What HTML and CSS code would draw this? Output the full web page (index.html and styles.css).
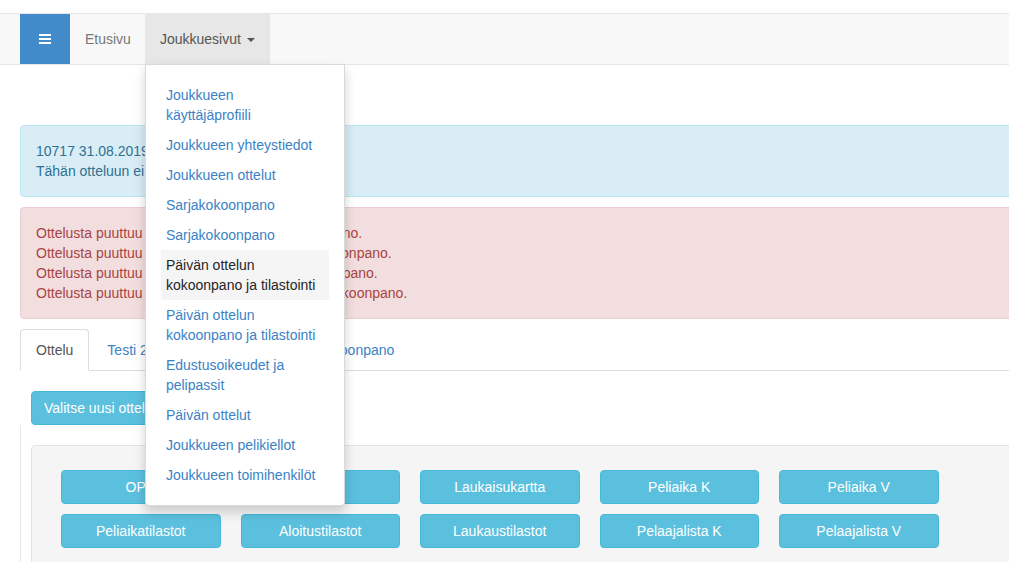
FILE: index.html
```html
<!DOCTYPE html>
<html lang="fi">
<head>
<meta charset="utf-8">
<title>Joukkuesivut</title>
<link rel="stylesheet" href="styles.css">
</head>
<body>
<header class="navbar">
  <div class="nav-inner">
    <button class="menu-btn" type="button" aria-label="Valikko">
      <svg width="12" height="10" viewBox="0 0 12 10"><rect x="0" y="0" width="12" height="2" fill="#fff"/><rect x="0" y="4" width="12" height="2" fill="#fff"/><rect x="0" y="8" width="12" height="2" fill="#fff"/></svg>
    </button>
    <ul class="nav">
      <li><a class="nav-link" href="#">Etusivu</a></li>
      <li class="dropdown">
        <a class="nav-link active" href="#">Joukkuesivut <span class="caret"></span></a>
        <ul class="dropdown-menu">
          <li><a href="#">Joukkueen käyttäjäprofiili</a></li>
          <li><a href="#">Joukkueen yhteystiedot</a></li>
          <li><a href="#">Joukkueen ottelut</a></li>
          <li><a href="#">Sarjakokoonpano</a></li>
          <li><a href="#">Sarjakokoonpano</a></li>
          <li><a class="hover" href="#">Päivän ottelun kokoonpano ja tilastointi</a></li>
          <li><a href="#">Päivän ottelun kokoonpano ja tilastointi</a></li>
          <li><a href="#">Edustusoikeudet ja pelipassit</a></li>
          <li><a href="#">Päivän ottelut</a></li>
          <li><a href="#">Joukkueen pelikiellot</a></li>
          <li><a href="#">Joukkueen toimihenkilöt</a></li>
        </ul>
      </li>
    </ul>
  </div>
</header>

<main class="content">
  <div class="alert alert-info">
    10717 31.08.2019 Testi 2 - Testi<br>
    Tähän otteluun ei ole kokoonpanoa.
  </div>
  <div class="alert alert-danger">
    Ottelusta puuttuu kotijoukkueen ottelun kokoonpano.<br>
    Ottelusta puuttuu vierasjoukkueen pelaajien kokoonpano.<br>
    Ottelusta puuttuu vierasjoukkueen ottelun kokoonpano.<br>
    Ottelusta puuttuu kotijoukkueen päivän ottelun kokoonpano.
  </div>

  <ul class="tabs">
    <li><a class="tab active" href="#">Ottelu</a></li>
    <li><a class="tab" href="#">Testi 2 kokoonpano</a></li>
    <li><a class="tab" href="#">Testi 1:n kokoonpano</a></li>
  </ul>

  <div class="tab-content">
    <button class="btn btn-info btn-pick" type="button">Valitse uusi ottelu</button>
    <div class="well-wrap">
      <div class="well">
        <div class="btn-grid">
          <button class="btn btn-info" type="button">OPR</button>
          <button class="btn btn-info" type="button">Raportti</button>
          <button class="btn btn-info" type="button">Laukaisukartta</button>
          <button class="btn btn-info" type="button">Peliaika K</button>
          <button class="btn btn-info" type="button">Peliaika V</button>
          <button class="btn btn-info" type="button">Peliaikatilastot</button>
          <button class="btn btn-info" type="button">Aloitustilastot</button>
          <button class="btn btn-info" type="button">Laukaustilastot</button>
          <button class="btn btn-info" type="button">Pelaajalista K</button>
          <button class="btn btn-info" type="button">Pelaajalista V</button>
        </div>
      </div>
    </div>
  </div>
</main>
</body>
</html>
```

FILE: styles.css
```css
* { box-sizing: border-box; }

html, body {
  margin: 0;
  padding: 0;
  overflow: hidden;
}

body {
  font-family: "Liberation Sans", Arial, sans-serif;
  font-size: 14px;
  line-height: 20px;
  color: #333;
  background: #fff;
}

a { text-decoration: none; }

ul { list-style: none; margin: 0; padding: 0; }

/* ---------- navbar ---------- */
.navbar {
  margin-top: 13px;
  background: #f8f8f8;
  border-top: 1px solid #e7e7e7;
  border-bottom: 1px solid #e7e7e7;
  position: relative;
  z-index: 10;
}

.nav-inner {
  display: flex;
  padding-left: 20px;
  height: 50px;
}

.menu-btn {
  width: 50px;
  height: 50px;
  border: 0;
  margin: 0;
  padding: 0;
  background: #428bca;
  display: flex;
  align-items: center;
  justify-content: center;
}

.menu-btn svg { display: block; }

.nav {
  display: flex;
}

.nav > li { position: relative; }

.nav-link {
  display: block;
  padding: 15px;
  line-height: 20px;
  color: #777;
}

.nav-link.active {
  background: #e7e7e7;
  color: #555;
  margin-left: -1px;
}

.caret {
  display: inline-block;
  width: 0;
  height: 0;
  margin-left: 2px;
  vertical-align: middle;
  border-top: 4px solid #555;
  border-left: 4px solid transparent;
  border-right: 4px solid transparent;
}

/* ---------- dropdown ---------- */
.dropdown-menu {
  position: absolute;
  top: 100%;
  left: -1px;
  width: 200px;
  padding: 15px;
  background: #fff;
  border: 1px solid rgba(0, 0, 0, 0.15);
  border-radius: 0 0 4px 4px;
  box-shadow: 0 6px 12px rgba(0, 0, 0, 0.175);
}

.dropdown-menu a {
  display: block;
  padding: 5px 13px 5px 5px;
  line-height: 20px;
  color: #3b82c4;
}

.dropdown-menu a.hover {
  background: #f5f5f5;
  color: #262626;
}

/* ---------- content ---------- */
.content {
  width: 1100px;
  padding: 60px 20px 0;
}

.alert {
  padding: 15px;
  border: 1px solid transparent;
  border-radius: 4px;
  margin-bottom: 10px;
}

.alert-info {
  color: #31708f;
  background: #d9edf7;
  border-color: #bce8f1;
}

.alert-danger {
  color: #a94442;
  background: #f2dede;
  border-color: #ebccd1;
}

/* ---------- tabs ---------- */
.tabs {
  display: flex;
  border-bottom: 1px solid #ddd;
}

.tabs li { margin-bottom: -1px; margin-right: 2px; }

.tab {
  display: block;
  padding: 10px 15px;
  line-height: 20px;
  color: #3b82c4;
  border: 1px solid transparent;
  border-radius: 4px 4px 0 0;
}

.tab.active {
  color: #555;
  background: #fff;
  border-color: #ddd #ddd transparent;
}

.tab-content {
  padding: 20px 0 0 11px;
}

.well-wrap {
  margin-left: -11px;
  padding: 20px 0 0 10px;
  border-left: 1px solid #e8e8e8;
}

/* ---------- buttons ---------- */
.btn {
  font-family: inherit;
  font-size: 14px;
  line-height: 20px;
  color: #fff;
  border: 1px solid #46b8da;
  border-radius: 4px;
  background: #5bc0de;
  padding: 6px 12px;
  margin: 0;
  text-align: center;
  white-space: nowrap;
}

.btn-pick {
  display: block;
}

.well {
  padding: 24px 29px 30px;
  background: #f5f5f5;
  border: 1px solid #e3e3e3;
  border-radius: 4px;
}

.btn-grid {
  display: grid;
  grid-template-columns: repeat(5, 159.5px);
  column-gap: 20px;
  row-gap: 10px;
}

.btn-grid .btn {
  height: 34px;
  padding: 6px 0;
}
```
